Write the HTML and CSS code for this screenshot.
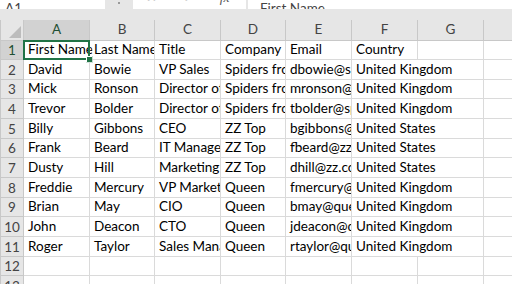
FILE: index.html
```html
<!DOCTYPE html>
<html lang="en">
<head>
    <meta charset="UTF-8">
    <title>Contacts - Excel</title>
    <link rel="stylesheet" href="styles.css">
</head>
<body>
    <div class="toolbar">
        <div class="name-box"><span>A1</span></div>
        <div class="grip"></div>
        <div class="fx-buttons">
            <span class="fx-cancel">&#x2715;</span>
            <span class="fx-enter">&#x2713;</span>
            <span class="fx-label">fx</span>
        </div>
        <div class="formula"><span>First Name</span></div>
    </div>

    <table class="sheet">
        <colgroup>
            <col class="col-head">
            <col class="col-a">
            <col class="col-b">
            <col class="col-c">
            <col class="col-d">
            <col class="col-e">
            <col class="col-f">
            <col class="col-g">
            <col class="col-h">
        </colgroup>
        <tr class="head-row">
            <th class="corner"><span class="corner-mark"></span></th>
            <th class="selected">A</th><th>B</th><th>C</th><th>D</th><th>E</th><th>F</th><th>G</th><th></th>
        </tr>
        <tr>
            <th class="selected">1</th>
            <td class="active">First Name<span class="selection"><span class="handle"></span></span></td>
            <td>Last Name</td><td>Title</td><td>Company</td><td>Email</td><td>Country</td><td></td><td></td>
        </tr>
        <tr>
            <th>2</th><td>David</td><td>Bowie</td><td>VP Sales</td><td>Spiders from Mars</td><td>dbowie@spiders.com</td>
            <td class="spill">United Kingdom</td><td></td><td></td>
        </tr>
        <tr>
            <th>3</th><td>Mick</td><td>Ronson</td><td>Director of Sales</td><td>Spiders from Mars</td><td>mronson@spiders.com</td>
            <td class="spill">United Kingdom</td><td></td><td></td>
        </tr>
        <tr>
            <th>4</th><td>Trevor</td><td>Bolder</td><td>Director of Marketing</td><td>Spiders from Mars</td><td>tbolder@spiders.com</td>
            <td class="spill">United Kingdom</td><td></td><td></td>
        </tr>
        <tr>
            <th>5</th><td>Billy</td><td>Gibbons</td><td>CEO</td><td>ZZ Top</td><td>bgibbons@zz.com</td>
            <td class="spill">United States</td><td></td><td></td>
        </tr>
        <tr>
            <th>6</th><td>Frank</td><td>Beard</td><td>IT Manager</td><td>ZZ Top</td><td>fbeard@zz.com</td>
            <td class="spill">United States</td><td></td><td></td>
        </tr>
        <tr>
            <th>7</th><td>Dusty</td><td>Hill</td><td>Marketing</td><td>ZZ Top</td><td>dhill@zz.com</td>
            <td class="spill">United States</td><td></td><td></td>
        </tr>
        <tr>
            <th>8</th><td>Freddie</td><td>Mercury</td><td>VP Marketing</td><td>Queen</td><td>fmercury@queen.com</td>
            <td class="spill">United Kingdom</td><td></td><td></td>
        </tr>
        <tr>
            <th>9</th><td>Brian</td><td>May</td><td>CIO</td><td>Queen</td><td>bmay@queen.com</td>
            <td class="spill">United Kingdom</td><td></td><td></td>
        </tr>
        <tr>
            <th>10</th><td>John</td><td>Deacon</td><td>CTO</td><td>Queen</td><td>jdeacon@queen.com</td>
            <td class="spill">United Kingdom</td><td></td><td></td>
        </tr>
        <tr>
            <th>11</th><td>Roger</td><td>Taylor</td><td>Sales Manager</td><td>Queen</td><td>rtaylor@queen.com</td>
            <td class="spill">United Kingdom</td><td></td><td></td>
        </tr>
        <tr>
            <th>12</th><td></td><td></td><td></td><td></td><td></td><td></td><td></td><td></td>
        </tr>
        <tr>
            <th>13</th><td></td><td></td><td></td><td></td><td></td><td></td><td></td><td></td>
        </tr>
    </table>
</body>
</html>
```

FILE: styles.css
```css
html, body {
    margin: 0;
    padding: 0;
    overflow: hidden;
    background-color: #ffffff;
    font-family: Lato, "Liberation Sans", sans-serif;
    font-size: 13.5px;
    color: #000000;
}
.toolbar {
    display: flex;
    align-items: flex-start;
    height: 20px;
    background-color: #e6e6e6;
}
.name-box, .fx-buttons, .formula {
    height: 9px;
    background-color: #ffffff;
    overflow: hidden;
}
.name-box span, .fx-buttons span, .formula span {
    display: inline-block;
    line-height: 14px;
    margin-top: -9px;
    color: #444444;
}
.name-box {
    width: 105px;
    padding-left: 5px;
    box-sizing: border-box;
}
.grip {
    width: 2px;
    height: 2px;
    margin: 2px 13px 0 13px;
    background-color: #9a9a9a;
}
.fx-buttons {
    width: 113px;
    display: flex;
    padding-left: 13px;
    box-sizing: border-box;
}
.fx-buttons .fx-cancel, .fx-buttons .fx-enter {
    color: #c4c4c4;
    font-family: "DejaVu Sans", sans-serif;
    font-size: 13px;
}
.fx-buttons .fx-enter {
    margin-left: 26px;
}
.fx-buttons .fx-label {
    margin-left: 26px;
    font-family: "Liberation Serif", serif;
    font-style: italic;
    color: #555555;
}
.formula {
    flex: 1;
    margin-left: 2px;
    padding-left: 12px;
}
.sheet {
    border-collapse: collapse;
    table-layout: fixed;
    width: 512px;
}
.col-head { width: 23px; }
.col-a { width: 66px; }
.col-b { width: 65px; }
.col-c { width: 66px; }
.col-d { width: 65px; }
.col-e { width: 66px; }
.col-f { width: 66px; }
.col-g { width: 66px; }
.col-h { width: 29px; }
.sheet tr {
    height: 19.65px;
}
.sheet .head-row {
    height: 20px;
}
.sheet th, .sheet td {
    padding: 0 4px 1px 4px;
    white-space: nowrap;
    overflow: hidden;
    vertical-align: bottom;
    line-height: 17px;
}
.sheet td {
    border: 1px solid #dadada;
}
.sheet th {
    background-color: #e6e6e6;
    border: 1px solid #c8c8c8;
    color: #444444;
    font-weight: normal;
    text-align: center;
    padding: 0;
}
.head-row th {
    vertical-align: middle;
    border-top: none;
}
.sheet th.selected {
    background-color: #d2d2d2;
    color: #1f4f33;
}
.corner {
    position: relative;
}
.corner-mark {
    position: absolute;
    right: 2px;
    bottom: 2px;
    width: 0;
    height: 0;
    border-left: 12px solid transparent;
    border-bottom: 12px solid #bcbcbc;
}
.sheet td.spill {
    overflow: visible;
    border-right-style: hidden;
}
.sheet td.active {
    position: relative;
    overflow: visible;
    clip-path: inset(-3px -3px -3px -3px);
}
.selection {
    position: absolute;
    left: -1px;
    top: -1px;
    right: -1px;
    bottom: -1px;
    border: 2px solid #217346;
}
.handle {
    position: absolute;
    right: -5px;
    bottom: -5px;
    width: 5px;
    height: 5px;
    background-color: #217346;
    border: 1px solid #ffffff;
}
```
